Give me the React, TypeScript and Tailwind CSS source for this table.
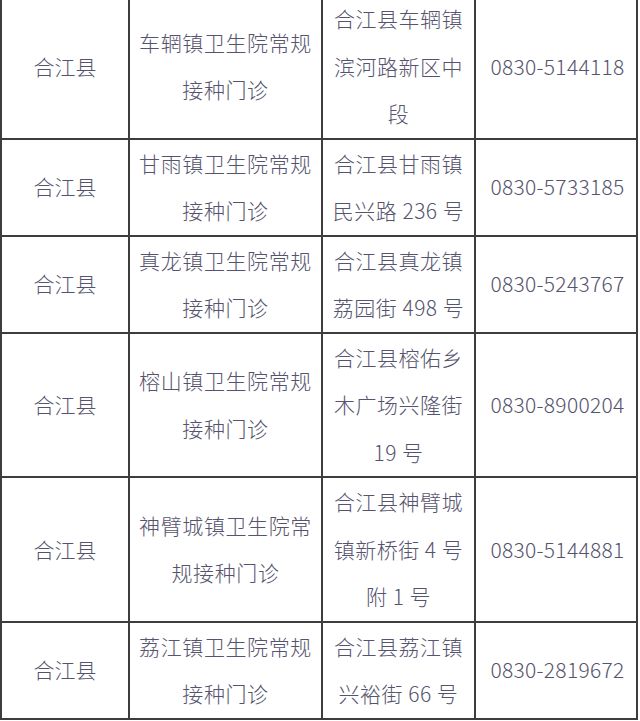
const rows = [
  {
    county: "合江县",
    name: ["车辋镇卫生院常规", "接种门诊"],
    address: ["合江县车辋镇", "滨河路新区中", "段"],
    phone: "0830-5144118",
  },
  {
    county: "合江县",
    name: ["甘雨镇卫生院常规", "接种门诊"],
    address: ["合江县甘雨镇", "民兴路 236 号"],
    phone: "0830-5733185",
  },
  {
    county: "合江县",
    name: ["真龙镇卫生院常规", "接种门诊"],
    address: ["合江县真龙镇", "荔园街 498 号"],
    phone: "0830-5243767",
  },
  {
    county: "合江县",
    name: ["榕山镇卫生院常规", "接种门诊"],
    address: ["合江县榕佑乡", "木广场兴隆街", "19 号"],
    phone: "0830-8900204",
  },
  {
    county: "合江县",
    name: ["神臂城镇卫生院常", "规接种门诊"],
    address: ["合江县神臂城", "镇新桥街 4 号", "附 1 号"],
    phone: "0830-5144881",
  },
  {
    county: "合江县",
    name: ["荔江镇卫生院常规", "接种门诊"],
    address: ["合江县荔江镇", "兴裕街 66 号"],
    phone: "0830-2819672",
  },
];

const Lines = ({ lines }: { lines: string[] }) => (
  <div className="flex flex-col items-center">
    {lines.map((line, i) => (
      <span key={i} className="whitespace-pre">
        {line}
      </span>
    ))}
  </div>
);

export default function App() {
  return (
    <div className="w-[640px] h-[721px] overflow-hidden bg-white">
      <div
        className="-mt-[7px] w-[638px] grid grid-cols-[128px_193px_153px_162px] border-l-2 border-t-2 border-[#3d3d3d] text-[21px] font-light leading-[47.5px] text-[#55536d]"
        style={{ fontFamily: '"Noto Sans CJK SC", "Noto Sans", sans-serif' }}
      >
        {rows.map((row, i) => (
          <div key={i} className="contents">
            <div className="flex items-center justify-center border-r-2 border-b-2 border-[#3d3d3d]">
              {row.county}
            </div>
            <div className="flex items-center justify-center border-r-2 border-b-2 border-[#3d3d3d] tracking-[0.6px]">
              <Lines lines={row.name} />
            </div>
            <div className="flex items-center justify-center border-r-2 border-b-2 border-[#3d3d3d] tracking-[0.5px]">
              <Lines lines={row.address} />
            </div>
            <div className="flex items-center justify-center border-r-2 border-b-2 border-[#3d3d3d] pl-[3px] tracking-[0.3px]">
              {row.phone}
            </div>
          </div>
        ))}
      </div>
    </div>
  );
}
